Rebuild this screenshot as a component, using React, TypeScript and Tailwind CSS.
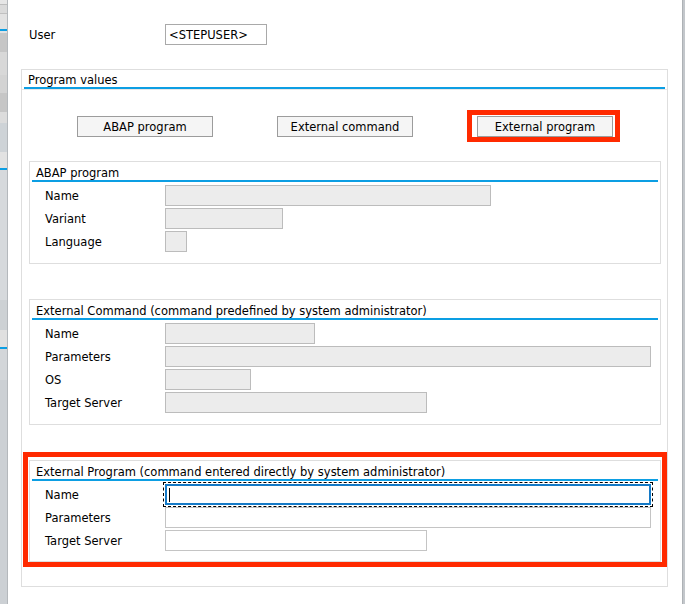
import React from "react";

const bands: { h: number; bg: string }[] = [
  { h: 4, bg: "#e6e6e6" },
  { h: 1, bg: "#bdbdbd" },
  { h: 8, bg: "#dadada" },
  { h: 1, bg: "#c0c0c0" },
  { h: 15, bg: "#e2e2e2" },
  { h: 2, bg: "#0c9ee3" },
  { h: 2, bg: "#e2e2e2" },
  { h: 19, bg: "#c6c6c6" },
  { h: 23, bg: "#d8d8d8" },
  { h: 18, bg: "#d3d3d3" },
  { h: 19, bg: "#c6c6c6" },
  { h: 11, bg: "#dcdcdc" },
  { h: 29, bg: "#ced3d7" },
  { h: 16, bg: "#e2e2e2" },
  { h: 2, bg: "#0c9ee3" },
  { h: 130, bg: "#d6d9dc" },
  { h: 30, bg: "#cdd1d4" },
  { h: 17, bg: "#e0e0e0" },
  { h: 2, bg: "#0c9ee3" },
  { h: 31, bg: "#d3d6d9" },
  { h: 224, bg: "#ccd0d4" },
];

function DisabledInput({ w }: { w: number }) {
  return (
    <div
      className="h-[21px] bg-[#ececec] border border-[#bcbcbc]"
      style={{ width: w }}
    />
  );
}

function EnabledInput({ w }: { w: number }) {
  return (
    <div
      className="h-[21px] bg-white border border-[#c4c4c4]"
      style={{ width: w }}
    />
  );
}

function Row({ label, children }: { label: string; children: React.ReactNode }) {
  return (
    <div className="flex items-center h-[21px]">
      <div className="w-[120px] text-black pt-[2px]">{label}</div>
      {children}
    </div>
  );
}

function SubBox({
  title,
  children,
  pb = "pb-[11px]",
}: {
  title: string;
  children: React.ReactNode;
  pb?: string;
}) {
  return (
    <div className={`border border-[#dedede] bg-white ${pb}`}>
      <div className="h-[18px] pl-[6px] pt-[6px] flex items-center text-black">{title}</div>
      <div className="mx-[2px] h-[2px] bg-[#0c9ee3]" />
      <div className="pt-[3px] pl-[15px] flex flex-col gap-[2px]">{children}</div>
    </div>
  );
}

function Btn({ children }: { children: React.ReactNode }) {
  return (
    <button className="w-[136px] h-[21px] bg-[#f5f5f5] border border-[#9c9c9c] text-black flex items-center justify-center pt-[2px]">
      {children}
    </button>
  );
}

export default function App() {
  return (
    <div className="w-[685px] h-[604px] flex overflow-hidden bg-white font-['DejaVu_Sans',sans-serif] text-[11.5px] leading-none">
      <div className="w-[8px] flex flex-col border-r border-[#b4b8bc] shrink-0">
        {bands.map((b, i) => (
          <div key={i} className="w-full shrink-0" style={{ height: b.h, background: b.bg }} />
        ))}
      </div>
      <div className="flex-1 flex flex-col">
        <div className="pt-[24px] pl-[21px] flex items-center">
          <div className="w-[136px] text-black pt-[3px]">User</div>
          <div className="w-[102px] h-[21px] border border-[#a9a9a9] bg-white flex items-center pl-[3px] pt-[2px] text-black text-[11.5px]">
            &lt;STEPUSER&gt;
          </div>
        </div>
        <div className="mt-[24px] ml-[13px] w-[647px] h-[518px] border border-[#dedede]">
          <div className="h-[17px] pl-[6px] pt-[5px] flex items-center text-black">Program values</div>
          <div className="mx-[2px] h-[2px] bg-[#0c9ee3]" />
          <div className="h-[1px] bg-[#e8e8e8]" />
          <div className="pt-[26px] pl-[55px] flex gap-[64px]">
            <Btn>ABAP program</Btn>
            <Btn>External command</Btn>
            <div className="relative">
              <Btn>External program</Btn>
              <div className="absolute left-[-10px] top-[-6px] w-[153px] h-[32px] border-[5px] border-[#ff2a00] pointer-events-none" />
            </div>
          </div>
          <div className="mt-[24px] ml-[7px] w-[632px] flex flex-col gap-[35px]">
            <SubBox title="ABAP program">
              <Row label="Name">
                <DisabledInput w={326} />
              </Row>
              <Row label="Variant">
                <DisabledInput w={118} />
              </Row>
              <Row label="Language">
                <DisabledInput w={22} />
              </Row>
            </SubBox>
            <SubBox title="External Command (command predefined by system administrator)">
              <Row label="Name">
                <DisabledInput w={150} />
              </Row>
              <Row label="Parameters">
                <DisabledInput w={486} />
              </Row>
              <Row label="OS">
                <DisabledInput w={86} />
              </Row>
              <Row label="Target Server">
                <DisabledInput w={262} />
              </Row>
            </SubBox>
            <div className="relative">
              <SubBox title="External Program (command entered directly by system administrator)" pb="pb-[10px]">
                <Row label="Name">
                  <div className="w-[486px] h-[21px] bg-white border-2 border-[#1479c6] outline-1 outline-dashed outline-black outline-offset-[1px] flex items-center pl-[2px]">
                    <span className="w-[1px] h-[14px] bg-black" />
                  </div>
                </Row>
                <Row label="Parameters">
                  <EnabledInput w={486} />
                </Row>
                <Row label="Target Server">
                  <EnabledInput w={262} />
                </Row>
              </SubBox>
              <div className="absolute left-[-6px] top-[-8px] right-[-6px] bottom-[-5px] border-[5px] border-[#ff2a00] pointer-events-none" />
            </div>
          </div>
        </div>
      </div>
      <div className="w-[3px] bg-[#c3c7cb] border-l border-[#aeb2b6] shrink-0" />
    </div>
  );
}
